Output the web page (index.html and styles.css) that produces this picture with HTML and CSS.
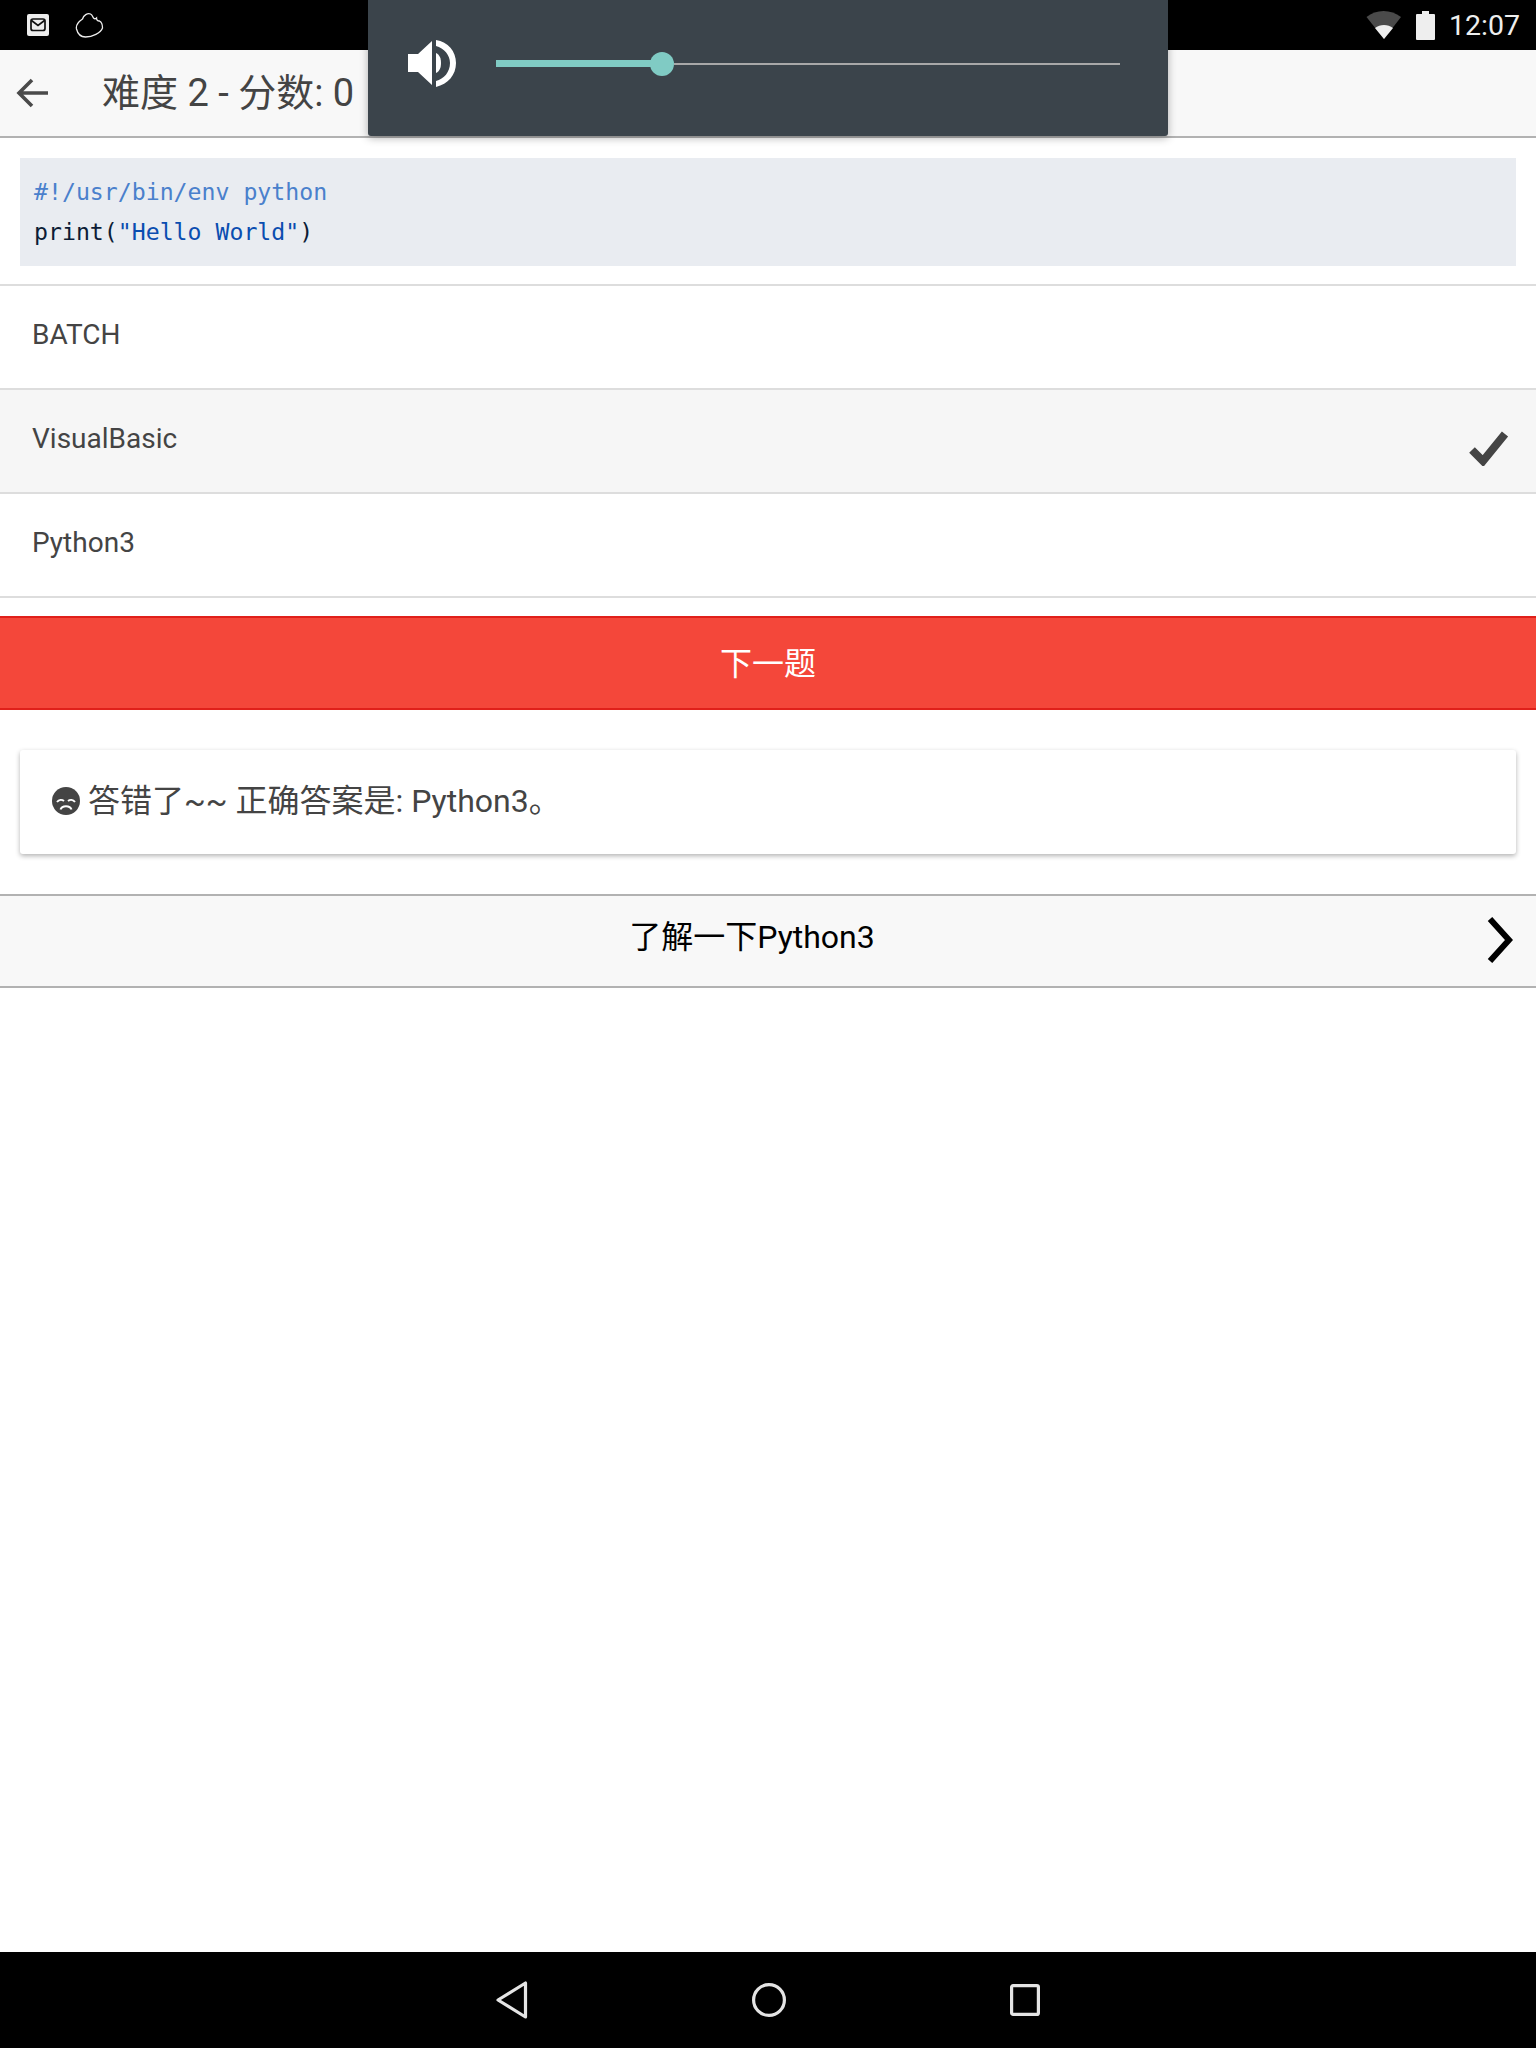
FILE: index.html
```html
<!DOCTYPE html>
<html lang="zh-CN">
<head>
  <meta charset="UTF-8" />
  <meta name="viewport" content="width=device-width, initial-scale=1.0"/>
  <title>难度 2</title>
  <link rel="stylesheet" href="styles.css">
</head>
<body>
  <!-- Status bar -->
  <div class="status-bar">
    <div class="status-left">
      <svg class="icon-mail" width="22" height="22" viewBox="0 0 22 22">
        <rect width="22" height="22" rx="2" fill="#eee"/>
        <rect x="4" y="5" width="14" height="11.5" rx="2" fill="none" stroke="#111" stroke-width="1.7"/>
        <path d="M4.5 6.5 L11 11.5 L17.5 6.5" fill="none" stroke="#111" stroke-width="1.7"/>
      </svg>
      <svg class="icon-cloud" width="29" height="25" viewBox="0 0 28 25">
        <path d="M1 16 C0 11 4 8 7 6 C8 2 12 0 15 1 C17 2 17 4 18 5 C19 6 20 6 21 5 C21 7 22 8 24 8 C26 9 27 12 27 15 C25 20 17 24 10 24 C5 24 2 20 1 16 Z" fill="none" stroke="#eee" stroke-width="1.3"/>
      </svg>
    </div>
    <div class="status-right">
      <svg width="36" height="30" viewBox="0 0 36 30">
        <path d="M0.5 7 C10 -1 25 -1 35 7 L18 29 Z" fill="#4a4a4a"/>
        <path d="M9 18 C14 14 22 14 27 18 L18 29 Z" fill="#eee"/>
      </svg>
      <svg class="battery" width="19" height="29" viewBox="0 0 19 29">
        <path d="M6 0 H13 V3 H18 Q19 3 19 4 V28 Q19 29 18 29 H1 Q0 29 0 28 V4 Q0 3 1 3 H6 Z" fill="#eee"/>
      </svg>
      <span class="clock">12:07</span>
    </div>
  </div>

  <!-- Title bar -->
  <header class="title-bar">
    <svg class="back" width="34" height="32" viewBox="0 0 34 32">
      <path d="M32 16 H4 M16 3 L3 16 L16 29" fill="none" stroke="#4a4a4a" stroke-width="3.6"/>
    </svg>
    <h1>难度 2 - 分数: 0</h1>
  </header>

  <!-- Volume popup -->
  <div class="volume">
    <svg width="50" height="48" viewBox="0 0 50 48">
      <path d="M1 14 H11 L25 1 V45 L11 32 H1 Z" fill="#fff"/>
      <path d="M29 13 C33 15 34 19 34 23 C34 27 33 31 29 33 Z" fill="#fff"/>
      <path d="M29 0 C41 2 49 11 49 23 C49 35 41 44 29 47 V41 C37 39 43 32 43 23 C43 15 37 8 29 6 Z" fill="#fff"/>
    </svg>
    <div class="slider">
      <div class="slider-fill"></div>
      <div class="slider-thumb"></div>
      <div class="slider-rest"></div>
    </div>
  </div>

  <main>
    <div class="code-wrap">
      <pre class="code"><span class="comment">#!/usr/bin/env python</span>
print(<span class="string">"Hello World"</span>)</pre>
    </div>

    <ul class="options">
      <li>BATCH</li>
      <li class="selected">VisualBasic
        <svg class="check" width="40" height="37" viewBox="0 0 40 37">
          <path d="M3 21 L14 32 L36 5" fill="none" stroke="#444" stroke-width="8"/>
        </svg>
      </li>
      <li>Python3</li>
    </ul>

    <button class="next-btn">下一题</button>

    <div class="card">
      <svg class="sad" width="28" height="28" viewBox="0 0 28 28">
        <circle cx="14" cy="14" r="14" fill="#444"/>
        <path d="M5 15 C7 12.5 10 12.5 12 14 M16 14 C18 12.5 21 12.5 23 15" stroke="#fff" stroke-width="2" fill="none"/>
        <path d="M8.5 22.5 C10 18 18 18 19.5 22.5" stroke="#fff" stroke-width="2" fill="none"/>
      </svg>
      <span>答错了~~ 正确答案是: Python3。</span>
    </div>

    <div class="learn-more">
      <span class="learn-text">了解一下Python3</span>
      <svg class="chevron" width="26" height="46" viewBox="0 0 26 46">
        <path d="M3 2 L22 23 L3 44" fill="none" stroke="#000" stroke-width="6"/>
      </svg>
    </div>
  </main>

  <!-- Navigation bar -->
  <nav class="nav-bar">
    <svg width="32" height="38" viewBox="0 0 32 38">
      <path d="M29.5 2 V36 L2 19 Z" fill="none" stroke="#e4e4e4" stroke-width="3.2" stroke-linejoin="round"/>
    </svg>
    <svg width="34" height="34" viewBox="0 0 34 34">
      <circle cx="17" cy="17" r="15.4" fill="none" stroke="#e4e4e4" stroke-width="3.2"/>
    </svg>
    <svg width="30" height="32" viewBox="0 0 30 32">
      <rect x="1.6" y="1.6" width="26.8" height="28.8" rx="1.5" fill="none" stroke="#e4e4e4" stroke-width="3.2"/>
    </svg>
  </nav>
</body>
</html>
```

FILE: styles.css
```css
* {
  box-sizing: border-box;
}
html, body {
  height: 100%;
}
body {
  margin: 0;
  display: flex;
  flex-direction: column;
  font-family: Roboto, "Noto Sans CJK SC", sans-serif;
  color: #444;
  background: #fff;
}

/* Status bar */
.status-bar {
  height: 50px;
  flex-shrink: 0;
  background: #000;
  display: flex;
  justify-content: space-between;
  align-items: center;
  padding: 0 16px 0 27px;
}
.status-left, .status-right {
  display: flex;
  align-items: center;
}
.icon-cloud {
  margin-left: 26px;
}
.status-right svg {
  margin-right: 13px;
}
.status-right .battery {
  margin-left: 1px;
  margin-right: 12px;
}
.clock {
  color: #eee;
  font-size: 28.5px;
  margin-left: 2px;
}

/* Title bar */
.title-bar {
  height: 88px;
  flex-shrink: 0;
  background: #f8f8f8;
  border-bottom: 2px solid #b2b2b2;
  display: flex;
  align-items: center;
  padding-left: 16px;
}
.title-bar h1 {
  margin: 0 0 8px 52px;
  font-size: 38px;
  font-weight: 400;
  color: #444;
}

/* Volume popup */
.volume {
  position: absolute;
  left: 368px;
  top: 0;
  width: 800px;
  height: 136px;
  background: #3b444b;
  border-radius: 0 0 3px 3px;
  box-shadow: 0 2px 8px rgba(0, 0, 0, 0.3);
  display: flex;
  align-items: center;
  padding: 0 48px 9px 39px;
}
.slider {
  flex: 1;
  margin-left: 39px;
  display: flex;
  align-items: center;
}
.slider-fill {
  width: 158px;
  height: 7px;
  background: #80cbc4;
}
.slider-thumb {
  width: 24px;
  height: 24px;
  margin-left: -4px;
  border-radius: 50%;
  background: #80cbc4;
}
.slider-rest {
  flex: 1;
  height: 2px;
  background: #a8a8a8;
}

/* Code block */
.code-wrap {
  padding: 20px 20px 18px;
  border-bottom: 2px solid #ddd;
}
.code {
  margin: 0;
  height: 108px;
  padding: 14px 14px;
  background: #e9ecf1;
  font-family: "DejaVu Sans Mono", monospace;
  font-size: 23.2px;
  line-height: 40px;
  color: #0c1c36;
}
.comment {
  color: #4a80cc;
}
.string {
  color: #0a4db0;
}

/* Options */
.options {
  list-style: none;
  margin: 0;
  padding: 0;
}
.options li {
  position: relative;
  height: 104px;
  padding: 0 32px 6px;
  display: flex;
  align-items: center;
  font-size: 28px;
  color: #444;
  border-bottom: 2px solid #ddd;
}
.options li.selected {
  background: #f6f6f6;
}
.check {
  position: absolute;
  right: 27px;
  top: 39px;
}

/* Next button */
.next-btn {
  display: block;
  width: 100%;
  height: 94px;
  margin-top: 18px;
  padding: 0 0 4px;
  border: 0;
  border-top: 2px solid #e0201a;
  border-bottom: 2px solid #e0201a;
  background: #f4473a;
  color: #fff;
  font-family: inherit;
  font-size: 32px;
}

/* Answer card */
.card {
  margin: 40px 20px 0;
  height: 104px;
  background: #fff;
  border-radius: 3px;
  box-shadow: 0 2px 5px rgba(0, 0, 0, 0.3);
  display: flex;
  align-items: center;
  padding: 0 0 0 32px;
  font-size: 32px;
  color: #444;
}
.card span {
  margin-bottom: 8px;
}
.sad {
  margin: 0 8px 2px 0;
}

/* Learn more */
.learn-more {
  position: relative;
  margin-top: 40px;
  height: 94px;
  background: #f8f8f8;
  border-top: 2px solid #b2b2b2;
  border-bottom: 2px solid #b2b2b2;
  display: flex;
  align-items: center;
  justify-content: center;
  padding: 0 32px 14px 0;
  font-size: 32px;
  color: #000;
}
.chevron {
  position: absolute;
  right: 23px;
  top: 21px;
}

main {
  flex: 1;
}

/* Navigation bar */
.nav-bar {
  height: 96px;
  flex-shrink: 0;
  background: #000;
  display: flex;
  justify-content: center;
  align-items: center;
  gap: 224px;
  padding-right: 1px;
}
```
